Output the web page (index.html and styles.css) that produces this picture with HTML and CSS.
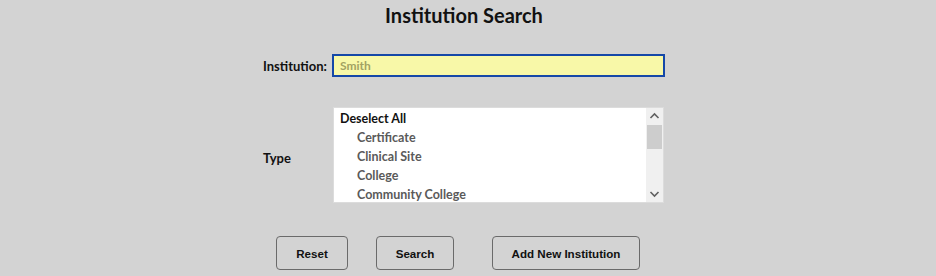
FILE: index.html
```html
<!DOCTYPE html>
<html lang="en">
<head>
    <meta charset="UTF-8">
    <title>Institution Search</title>
    <link rel="stylesheet" href="styles.css">
</head>
<body>
    <h1 class="page-title">Institution Search</h1>

    <div class="search-form">
        <label class="field-label" for="institution">Institution:</label>
        <input class="text-input" type="text" id="institution" placeholder="Smith">

        <div class="field-label type-label">Type</div>
        <div class="listbox">
            <div class="listbox-items">
                <div class="list-item list-head">Deselect All</div>
                <div class="list-item">Certificate</div>
                <div class="list-item">Clinical Site</div>
                <div class="list-item">College</div>
                <div class="list-item">Community College</div>
            </div>
            <div class="scrollbar">
                <svg class="arrow" width="17" height="17" viewBox="0 0 17 17">
                    <path d="M4.5 10 L8.5 6 L12.5 10" fill="none" stroke="#606060" stroke-width="1.6"/>
                </svg>
                <div class="thumb"></div>
                <svg class="arrow arrow-down" width="17" height="17" viewBox="0 0 17 17">
                    <path d="M4.5 7 L8.5 11 L12.5 7" fill="none" stroke="#606060" stroke-width="1.6"/>
                </svg>
            </div>
        </div>
    </div>

    <div class="button-row">
        <button class="btn btn-reset">Reset</button>
        <button class="btn btn-search">Search</button>
        <button class="btn btn-add">Add New Institution</button>
    </div>
</body>
</html>
```

FILE: styles.css
```css
body {
    margin: 0;
    background-color: #d3d3d3;
    font-family: Lato, sans-serif;
    color: #111;
}
.page-title {
    margin: 0;
    padding-top: 3px;
    text-align: center;
    font-size: 20px;
    font-weight: bold;
    padding-right: 8px;
}
.search-form {
    display: grid;
    grid-template-columns: 69px 332px;
    grid-template-rows: 23px 96px;
    row-gap: 30px;
    align-items: center;
    margin-top: 27px;
    padding-left: 263px;
}
.field-label {
    font-size: 13px;
    font-weight: bold;
}
.type-label {
    padding-top: 5px;
}
.text-input {
    box-sizing: border-box;
    width: 333px;
    height: 23px;
    margin: 0;
    padding: 0 0 0 6px;
    border: 2px solid #1548a8;
    background-color: #f8f8a8;
    font-family: Lato, sans-serif;
    font-size: 12px;
    font-weight: bold;
    outline: none;
}
.text-input::placeholder {
    color: #a2a262;
}
.listbox {
    box-sizing: border-box;
    width: 331px;
    height: 96px;
    margin-left: 1px;
    border: 1px solid #dcdcdc;
    background-color: #fff;
    display: flex;
    overflow: hidden;
}
.listbox-items {
    flex: 1;
    padding-top: 1px;
}
.list-item {
    height: 19px;
    line-height: 19px;
    padding-left: 23px;
    font-size: 12.5px;
    font-weight: bold;
    color: #5a5a5a;
}
.list-head {
    padding-left: 6px;
    color: #111;
}
.scrollbar {
    width: 17px;
    background-color: #f0f0f0;
    display: flex;
    flex-direction: column;
}
.arrow {
    display: block;
}
.thumb {
    height: 24px;
    margin: 0 1px;
    background-color: #cdcdcd;
}
.arrow-down {
    margin-top: auto;
}
.button-row {
    display: flex;
    margin-top: 33px;
    padding-left: 276px;
}
.btn {
    box-sizing: border-box;
    height: 34px;
    border: 1px solid #6a6a6a;
    border-radius: 4px;
    background-color: #d3d3d3;
    font-family: "Liberation Sans", Arial, sans-serif;
    font-size: 11.6px;
    font-weight: bold;
    color: #111;
    padding: 0;
}
.btn-reset {
    width: 72px;
}
.btn-search {
    width: 78px;
    margin-left: 28px;
}
.btn-add {
    width: 148px;
    margin-left: 38px;
}
```
